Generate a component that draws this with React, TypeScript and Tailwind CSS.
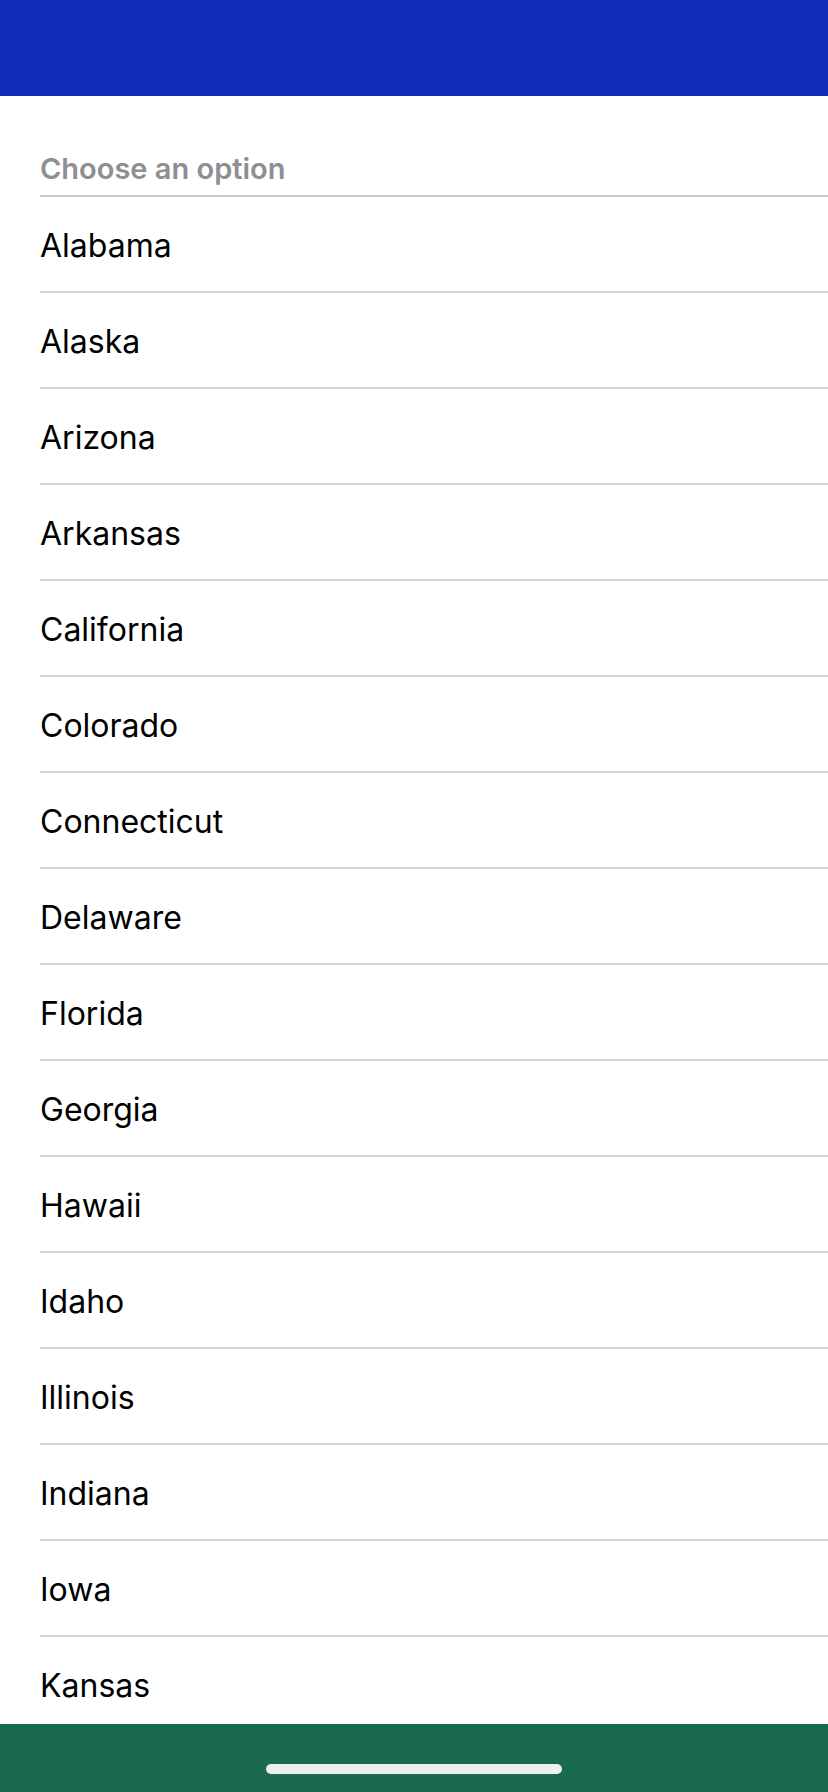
import React from "react";

const states = [
  "Alabama",
  "Alaska",
  "Arizona",
  "Arkansas",
  "California",
  "Colorado",
  "Connecticut",
  "Delaware",
  "Florida",
  "Georgia",
  "Hawaii",
  "Idaho",
  "Illinois",
  "Indiana",
  "Iowa",
  "Kansas",
];

export default function App() {
  return (
    <div
      className="w-[828px] h-[1792px] flex flex-col bg-white overflow-hidden"
      style={{ fontFamily: "Inter, 'Liberation Sans', sans-serif" }}
    >
      <div className="h-[96px] shrink-0 bg-[#132cb8]" />
      <div className="flex-1 overflow-hidden">
        <div className="h-[101px] flex items-end pl-[40px]">
          <div className="w-full border-b-2 border-[#c8c7cc] pb-[9px]">
            <span className="text-[29px] leading-[34px] font-semibold text-[#8e8e93]">
              Choose an option
            </span>
          </div>
        </div>
        <div className="pl-[40px]">
          {states.map((s) => (
            <div
              key={s}
              className="h-[96px] flex items-center pt-[4px] border-b-2 border-[#d4d4d6]"
            >
              <span className="text-[32px] leading-[40px] text-black">{s}</span>
            </div>
          ))}
        </div>
      </div>
      <div className="h-[68px] shrink-0 bg-[#1a6b4e] flex items-end justify-center pb-[18px]">
        <div className="w-[296px] h-[10px] rounded-full bg-[#eef0ee]" />
      </div>
    </div>
  );
}
